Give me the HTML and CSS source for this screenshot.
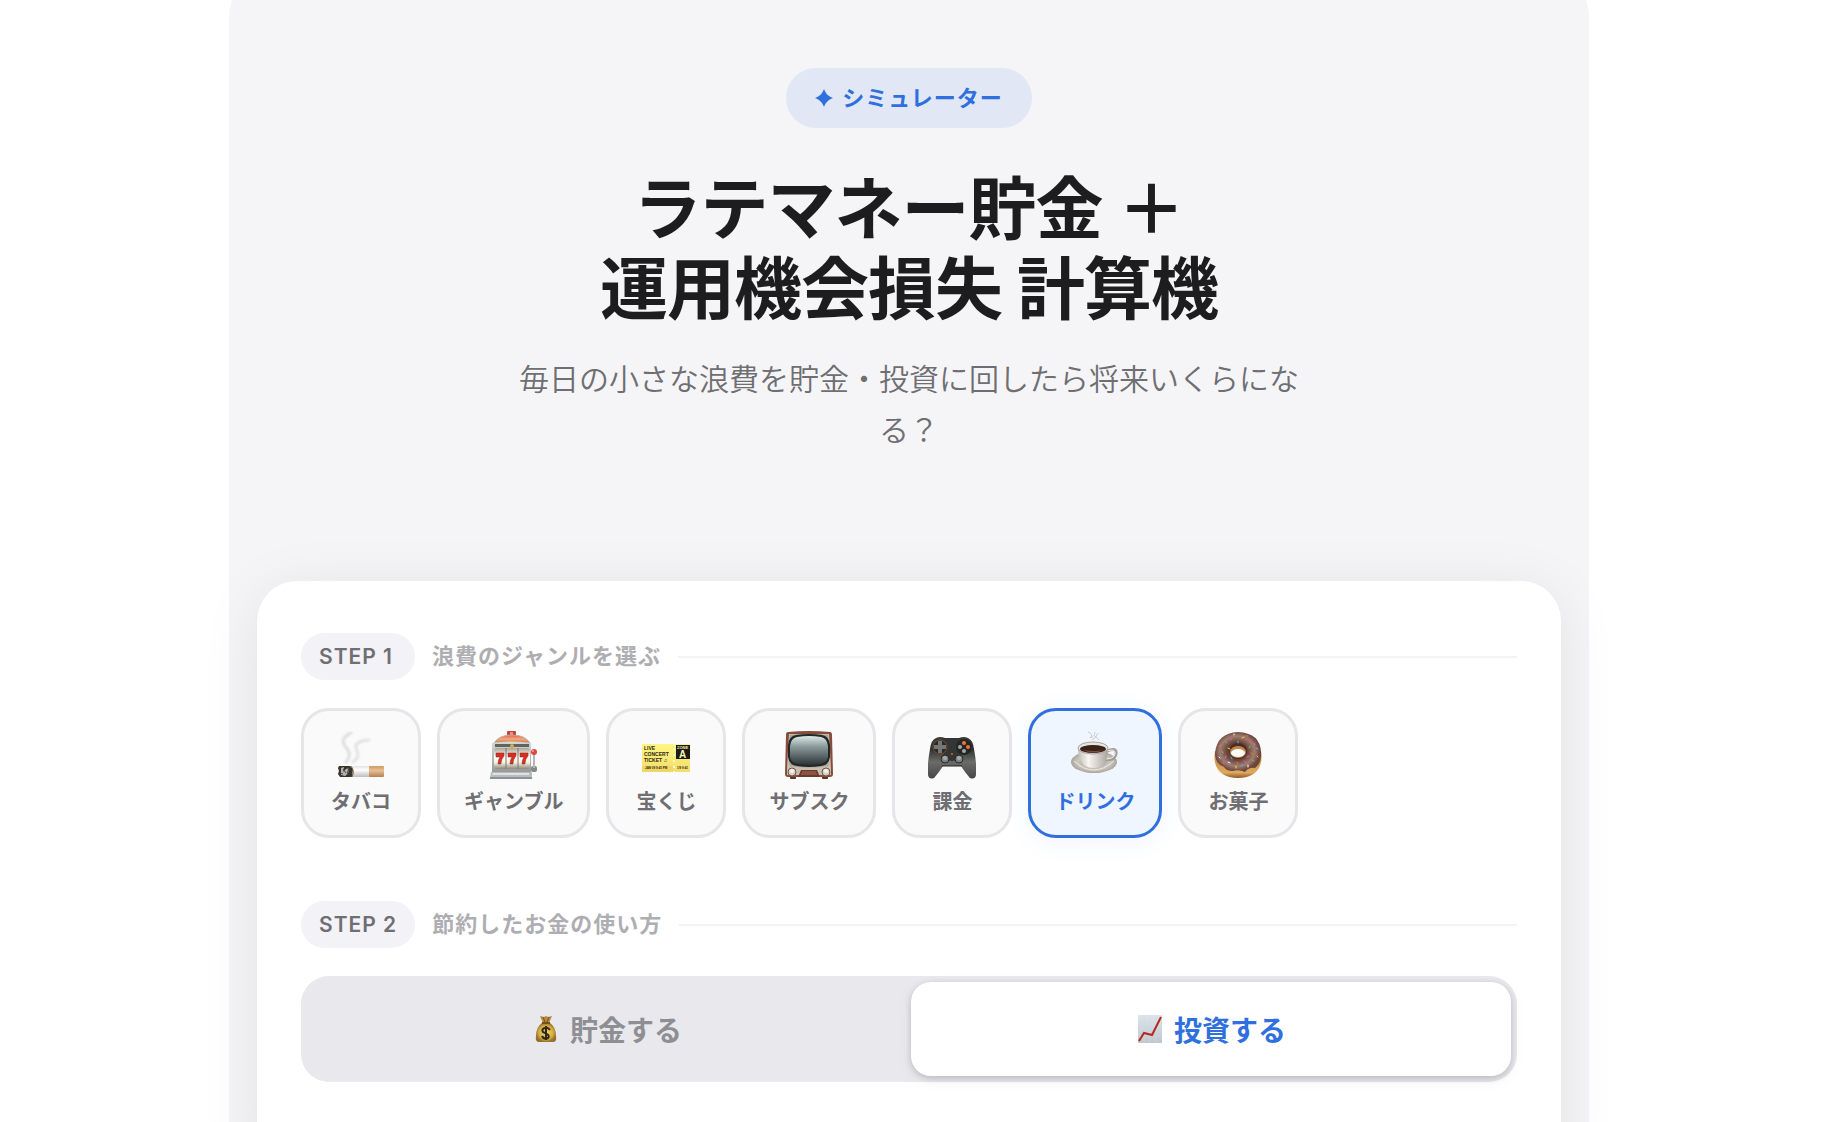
FILE: index.html
```html
<!DOCTYPE html>
<html lang="ja">
<head>
  <meta charset="UTF-8">
  <meta name="viewport" content="width=device-width, initial-scale=1.0">
  <title>ラテマネー貯金 ＋ 運用機会損失 計算機</title>
  <link rel="stylesheet" href="styles.css">
</head>
<body>
  <main class="simulator">
    <header class="hero">
      <p class="hero-badge">
        <svg class="star" viewBox="0 0 18 18" aria-hidden="true"><path d="M9 0C11 5 13 7 18 9C13 11 11 13 9 18C7 13 5 11 0 9C5 7 7 5 9 0Z" fill="currentColor"/></svg>
        <span>シミュレーター</span>
      </p>
      <h1>ラテマネー貯金 ＋<br>運用機会損失 計算機</h1>
      <p class="hero-sub">毎日の小さな浪費を貯金・投資に回したら将来いくらになる？</p>
    </header>

    <div class="card">
      <section class="step">
        <div class="step-head">
          <span class="step-no">STEP 1</span>
          <h2>浪費のジャンルを選ぶ</h2>
        </div>
        <div class="genres">
          <button type="button" class="genre">
            <svg viewBox="0 0 48 48" aria-hidden="true">
              <defs>
                <linearGradient id="paper" x1="0" y1="0" x2="0" y2="1"><stop offset="0" stop-color="#e2e2e2"/><stop offset=".35" stop-color="#fff"/><stop offset="1" stop-color="#bdbdc0"/></linearGradient>
                <linearGradient id="filter" x1="0" y1="0" x2="0" y2="1"><stop offset="0" stop-color="#c99a67"/><stop offset=".4" stop-color="#e9c095"/><stop offset="1" stop-color="#b78050"/></linearGradient>
                <filter id="smoke" x="-20%" y="-20%" width="140%" height="140%"><feGaussianBlur stdDeviation="1"/></filter>
              </defs>
              <g filter="url(#smoke)" fill="none" stroke-linecap="round">
                <path d="M9 31C14 25 13 21 8 15C4 10 7 5 14 2" stroke="#dedede" stroke-width="3"/>
                <path d="M16 31C23 26 21 22 19 17C18 12 24 9 32 9" stroke="#e2e2e2" stroke-width="3"/>
              </g>
              <rect x="12" y="35" width="22" height="11" fill="url(#paper)"/>
              <rect x="32" y="35" width="15" height="11" rx="1" fill="url(#filter)"/>
              <path d="M2 35L13 35L16 38L15 46L3 46L1 43L2 40L1 37Z" fill="#37332f"/>
              <path d="M4 37L7 36L6 41L9 38L12 37L11 43L8 45L4 44Z" fill="#b7b2ac"/>
              <path d="M6 38L9 42M12 36L10 44M3 42L6 43" stroke="#4e4843" stroke-width="1"/>
              <path d="M14 35Q18 40 15 46" stroke="#806336" stroke-width="1" fill="none"/>
            </svg>
            <span>タバコ</span>
          </button>
          <button type="button" class="genre">
            <svg viewBox="0 0 48 48" aria-hidden="true">
              <defs>
                <linearGradient id="dome" x1="0" y1="0" x2="0" y2="1"><stop offset="0" stop-color="#e0603f"/><stop offset=".5" stop-color="#f5a783"/><stop offset="1" stop-color="#c9823a"/></linearGradient>
                <linearGradient id="reel" x1="0" y1="0" x2="0" y2="1"><stop offset="0" stop-color="#a9a594"/><stop offset=".4" stop-color="#fffef6"/><stop offset=".7" stop-color="#f3f0e2"/><stop offset="1" stop-color="#8c897b"/></linearGradient>
                <linearGradient id="steel" x1="0" y1="0" x2="0" y2="1"><stop offset="0" stop-color="#d5d8d8"/><stop offset="1" stop-color="#929898"/></linearGradient>
              </defs>
              <rect x="17" y="0" width="9" height="5" rx="1" fill="#c9412f"/>
              <rect x="20" y="1" width="3" height="3" fill="#f58c72"/>
              <path d="M4 12Q9 4 22 4Q35 4 40 12Z" fill="url(#dome)" stroke="#b0b2b0" stroke-width="1"/>
              <path d="M2 12Q22 9 41 12V42H2Z" fill="url(#steel)"/>
              <rect x="5" y="13" width="34" height="3" fill="#62635c"/>
              <circle cx="22" cy="15" r="2" fill="#d5a93c"/>
              <rect x="4" y="17" width="36" height="21" rx="3" fill="url(#reel)"/>
              <path d="M16 17V38M28 17V38" stroke="#7c786c" stroke-width="1"/>
              <g fill="#dc2d24" stroke="#8d211c" stroke-width=".5">
                <path d="M6 22H14V25Q11 28 11 33H8Q8 29 10 26H6Z"/>
                <path d="M18 22H26V25Q23 28 23 33H20Q20 29 22 26H18Z"/>
                <path d="M30 22H38V25Q35 28 35 33H32Q32 29 34 26H30Z"/>
              </g>
              <path d="M1 41L42 41V47H0Z" fill="#b8bcbc"/>
              <path d="M3 42H39V44H2Z" fill="#dfe2e2"/>
              <path d="M0 46H42V48H0Z" fill="#8c9191"/>
              <rect x="41" y="35" width="6" height="6" rx="2" fill="#858888"/>
              <path d="M44 22V37" stroke="#b9b5b2" stroke-width="2"/>
              <circle cx="44" cy="21" r="3" fill="#e2463f"/>
              <circle cx="43" cy="20" r="1" fill="#ff9e96"/>
            </svg>
            <span>ギャンブル</span>
          </button>
          <button type="button" class="genre">
            <svg viewBox="0 0 48 48" aria-hidden="true">
              <defs>
                <linearGradient id="stub" x1="0" y1="0" x2="0" y2="1"><stop offset="0" stop-color="#fdf683"/><stop offset="1" stop-color="#f3dc6c"/></linearGradient>
              </defs>
              <path d="M0 13H48V41H0Z" fill="url(#stub)"/>
              <path d="M0 35H31V41H0Z" fill="#f0d667"/>
              <rect x="34" y="14" width="14" height="14" fill="#1c1a12"/>
              <g fill="#fff"><circle cx="32" cy="13" r="1"/><circle cx="32" cy="18" r="1"/><circle cx="32" cy="24" r="1"/><circle cx="32" cy="30" r="1"/><circle cx="32" cy="36" r="1"/><circle cx="32" cy="41" r="1"/></g>
              <g class="ticket-text">
                <text x="2" y="19" font-size="5">LIVE</text>
                <text x="2" y="25" font-size="5">CONCERT</text>
                <text x="2" y="31" font-size="5">TICKET ♫</text>
                <text x="3" y="38" font-size="3">JAN 09  9:41 PM</text>
                <text x="35" y="38" font-size="3">1/9  9:41</text>
                <text x="35" y="18" font-size="4" class="zone">ZONE</text>
                <text x="37" y="27" font-size="10" class="zone">A</text>
              </g>
            </svg>
            <span>宝くじ</span>
          </button>
          <button type="button" class="genre">
            <svg viewBox="0 0 48 48" aria-hidden="true">
              <defs>
                <linearGradient id="screen" x1="0" y1="0" x2="0" y2="1"><stop offset="0" stop-color="#dce9e9"/><stop offset=".35" stop-color="#8d9d9e"/><stop offset="1" stop-color="#2c3436"/></linearGradient>
              </defs>
              <rect x="5" y="44" width="6" height="4" rx="1" fill="#59352a"/>
              <rect x="37" y="44" width="6" height="4" rx="1" fill="#59352a"/>
              <path d="M3 1Q24 -1 45 1Q47 1 47 4L48 43Q48 46 45 46H3Q0 46 0 43L1 4Q1 1 3 1Z" fill="#874c3a"/>
              <path d="M4 3H44L46 37V44H2V37Z" fill="#c8beb0"/>
              <path d="M5 4Q24 2 43 4Q46 21 43 35Q24 38 5 35Q2 20 5 4Z" fill="#a9a296"/>
              <path d="M11 4Q24 2 37 4Q44 5 45 14V26Q44 34 36 35Q24 37 12 35Q4 34 3 26V14Q4 5 11 4Z" fill="#22282a"/>
              <path d="M12 6Q24 4 36 6Q42 7 43 15V26Q42 32 35 33Q24 35 13 33Q6 32 5 26V15Q6 7 12 6Z" fill="url(#screen)"/>
              <path d="M16 39H32L35 46H13Z" fill="#6c3a2c"/>
              <path d="M17 41H31M16 43H32" stroke="#a96e54" stroke-width="1"/>
              <circle cx="7" cy="41" r="4" fill="#d9d3c6" stroke="#6b574b"/>
              <circle cx="41" cy="41" r="4" fill="#d9d3c6" stroke="#6b574b"/>
              <circle cx="7" cy="40" r="2" fill="#f6f2e8"/><circle cx="41" cy="40" r="2" fill="#f6f2e8"/>
            </svg>
            <span>サブスク</span>
          </button>
          <button type="button" class="genre">
            <svg viewBox="0 0 48 48" aria-hidden="true">
              <defs>
                <linearGradient id="pad" x1="0" y1="0" x2="0" y2="1"><stop offset="0" stop-color="#3c3e3d"/><stop offset=".3" stop-color="#303231"/><stop offset=".6" stop-color="#6b6c6a"/><stop offset="1" stop-color="#454645"/></linearGradient>
              </defs>
              <path d="M8 7Q12 5 17 7H31Q36 5 40 7Q45 9 46 18Q49 34 48 44Q47 49 42 47Q36 40 33 35H15Q12 40 6 47Q1 49 0 44Q-1 34 2 18Q3 9 8 7Z" fill="url(#pad)"/>
              <path d="M14 7H34L33 21Q31 30 24 30Q17 30 15 21Z" fill="#343635"/>
              <path d="M14 35H34" stroke="#222" stroke-width="1"/>
              <circle cx="12" cy="16" r="7" fill="#292b2a" stroke="#7b4b30"/>
              <path d="M10 10H14V14H18V18H14V22H10V18H6V14H10Z" fill="#737775"/>
              <circle cx="36" cy="16" r="8" fill="#252726"/>
              <circle cx="36" cy="12" r="2" fill="#f4752f"/><circle cx="40" cy="16" r="2" fill="#f4752f"/>
              <circle cx="32" cy="16" r="2" fill="#a3a7a5"/><circle cx="36" cy="20" r="2" fill="#a3a7a5"/>
              <circle cx="24" cy="23" r="1" fill="#cd6b36"/>
              <circle cx="17" cy="28" r="4" fill="#7d8381" stroke="#272827"/><circle cx="31" cy="28" r="4" fill="#7d8381" stroke="#272827"/>
              <circle cx="17" cy="27" r="2" fill="#a7adab"/><circle cx="31" cy="27" r="2" fill="#a7adab"/>
            </svg>
            <span>課金</span>
          </button>
          <button type="button" class="genre active" aria-pressed="true">
            <svg viewBox="0 0 48 48" aria-hidden="true">
              <defs>
                <linearGradient id="cup" x1="0" y1="0" x2="1" y2="0"><stop offset="0" stop-color="#c2bdb5"/><stop offset=".35" stop-color="#f8f6f2"/><stop offset="1" stop-color="#aaa49b"/></linearGradient>
                <radialGradient id="saucer"><stop offset="0" stop-color="#8f8981"/><stop offset=".7" stop-color="#cdc8c0"/><stop offset="1" stop-color="#aaa59c"/></radialGradient>
              </defs>
              <path d="M17 1Q23 3 19 7Q24 6 24 1M21 9Q26 6 27 2M24 5L28 9" stroke="#c9cdd2" stroke-width="1" fill="none"/>
              <ellipse cx="23" cy="31" rx="23" ry="11" fill="url(#saucer)"/>
              <path d="M3 30Q22 48 43 30" stroke="#ece9e4" stroke-width="1" fill="none"/>
              <path d="M36 20Q46 16 45 23Q44 29 34 29" stroke="#a29c95" stroke-width="3" fill="none"/>
              <path d="M36 20Q45 17 44 23Q43 28 34 28" stroke="#f3f0ed" stroke-width="1" fill="none"/>
              <path d="M7 17Q7 37 23 37Q37 37 37 17Z" fill="url(#cup)"/>
              <ellipse cx="22" cy="17" rx="15" ry="6" fill="#e8e4de" stroke="#a8a29b"/>
              <ellipse cx="22" cy="18" rx="13" ry="4" fill="#3b2118"/>
              <path d="M12 19Q22 24 32 19Q24 21 12 19Z" fill="#765040"/>
            </svg>
            <span>ドリンク</span>
          </button>
          <button type="button" class="genre">
            <svg viewBox="0 0 48 48" aria-hidden="true">
              <defs>
                <linearGradient id="dough" x1="0" y1="0" x2="0" y2="1"><stop offset=".5" stop-color="#d29a50"/><stop offset=".8" stop-color="#dcaa60"/><stop offset="1" stop-color="#925526"/></linearGradient>
                <radialGradient id="glaze" cx=".48" cy=".48"><stop offset="0" stop-color="#57332a"/><stop offset=".45" stop-color="#6a443a"/><stop offset=".75" stop-color="#a07d73"/><stop offset="1" stop-color="#6b443a"/></radialGradient>
              </defs>
              <path d="M1 20H47C50 38 40 47 24 47C8 47 -2 38 1 20Z" fill="url(#dough)"/>
              <path d="M24 1Q46 2 47 21Q48 32 41 37Q35 36 31 41Q25 38 19 40Q12 40 10 36Q1 33 1 22Q3 2 24 1Z" fill="url(#glaze)"/>
              <ellipse cx="24" cy="20" rx="9" ry="8" fill="#4d2c24"/>
              <ellipse cx="24" cy="21" rx="8" ry="6" fill="#c28a4a"/>
              <ellipse cx="24" cy="22" rx="7" ry="4" fill="#fafafa"/>
              <g stroke-width="1" stroke-linecap="round">
                <path d="M20 3V4M5 26L6 27M34 34V36M14 31L16 32" stroke="#fff"/>
                <path d="M11 10L13 12M36 15L35 17M8 20L9 22M38 29L40 30" stroke="#61c64b"/>
                <path d="M28 7L30 6M14 17L16 18M22 35V37M43 25L44 26" stroke="#f2d94b"/>
                <path d="M16 9L18 8M35 9L37 10M9 31L10 33M30 30L32 31" stroke="#ed5f82"/>
                <path d="M24 10V12M42 17L44 18M17 26L18 28M27 35L29 34" stroke="#47b8e5"/>
                <path d="M5 15L7 14M32 5H34M37 22L39 23M23 31L24 33" stroke="#ef7336"/>
                <path d="M40 12L41 14M12 25L11 27M33 26L35 25" stroke="#d56bd5"/>
              </g>
            </svg>
            <span>お菓子</span>
          </button>
        </div>
      </section>

      <section class="step">
        <div class="step-head">
          <span class="step-no">STEP 2</span>
          <h2>節約したお金の使い方</h2>
        </div>
        <div class="modes">
          <button type="button" class="mode">
            <svg viewBox="0 0 28 28" aria-hidden="true">
              <defs>
                <radialGradient id="bag"><stop offset="0" stop-color="#f4d873"/><stop offset=".7" stop-color="#d4ac42"/><stop offset="1" stop-color="#94722a"/></radialGradient>
              </defs>
              <path d="M8 1L12 2L14 1L16 2L20 1L17 8H11Z" fill="#b58a3a"/>
              <path d="M11 2L13 7M17 2L15 7" stroke="#77551e" stroke-width="1"/>
              <path d="M10 8Q4 12 4 21Q3 27 7 27H21Q25 27 24 21Q24 12 18 8Z" fill="url(#bag)"/>
              <path d="M10 8H18" stroke="#76511e" stroke-width="2"/>
              <path d="M18 15Q16 12 13 13Q9 14 11 17Q13 18 15 19Q18 21 16 23Q12 25 10 21M14 11V25" stroke="#302818" stroke-width="2" fill="none"/>
            </svg>
            貯金する
          </button>
          <button type="button" class="mode active" aria-pressed="true">
            <svg viewBox="0 0 28 28" aria-hidden="true">
              <defs>
                <linearGradient id="sheet" x1="0" y1="0" x2="0" y2="1"><stop offset="0" stop-color="#dce5ed"/><stop offset="1" stop-color="#c0c7ce"/></linearGradient>
              </defs>
              <rect x="2" y="0" width="24" height="28" fill="url(#sheet)"/>
              <path d="M2 7H26M2 14H26M2 21H26M8 0V28M14 0V28M20 0V28" stroke="#d0d8df" stroke-width="1" opacity=".6"/>
              <path d="M3 26L8 18L16 20L25 2" stroke="#b92722" stroke-width="2" fill="none"/>
            </svg>
            投資する
          </button>
        </div>
      </section>
    </div>
  </main>
  <script>
    // One active button per group
    document.querySelectorAll(".genres, .modes").forEach((group) => {
      group.addEventListener("click", (e) => {
        const button = e.target.closest("button");
        if (!button) return;
        group.querySelectorAll("button").forEach((b) => {
          b.classList.toggle("active", b === button);
          b.setAttribute("aria-pressed", b === button);
        });
      });
    });
  </script>
</body>
</html>
```
FILE: styles.css
```css
* {
  box-sizing: border-box;
}
body {
  margin: 0;
  padding-right: 10px;
  background-color: #fff;
  color: #1d1d1f;
  font-family: Inter, "Noto Sans CJK JP", sans-serif;
}
h1,
h2,
p {
  margin: 0;
}
button {
  font-family: inherit;
  cursor: pointer;
}
.simulator {
  max-width: 1360px;
  margin: -38px auto 0;
  padding: 0 28px 56px;
  background-color: #f5f5f7;
  border-radius: 56px;
}
.hero {
  display: flex;
  flex-direction: column;
  align-items: center;
  padding: 106px 48px 125px;
  text-align: center;
}
.hero-badge {
  display: flex;
  align-items: center;
  gap: 9px;
  height: 60px;
  padding: 0 29px;
  border-radius: 30px;
  background-color: #e1e7f5;
  color: #2f6fde;
  font-size: 22px;
  font-weight: 600;
  letter-spacing: 1px;
}
.hero-badge span {
  padding-bottom: 5px;
}
.star {
  width: 18px;
  height: 18px;
}
h1 {
  margin-top: 41px;
  font-size: 68px;
  font-weight: 700;
  line-height: 80px;
  letter-spacing: -1px;
}
.hero-sub {
  max-width: 800px;
  margin-top: 25px;
  color: #6e6e73;
  font-size: 30px;
  font-weight: 350;
  line-height: 51px;
}
.card {
  padding: 52px 44px 96px;
  background-color: #fff;
  border-radius: 40px;
  box-shadow: 0 8px 60px rgba(0, 0, 0, 0.08);
}
.step + .step {
  margin-top: 63px;
}
.step-head {
  display: flex;
  align-items: center;
  gap: 17px;
  margin-bottom: 28px;
}
.step-head::after {
  content: "";
  flex: 1;
  height: 2px;
  background-color: #f2f2f7;
}
.step-no {
  min-width: 114px;
  padding: 0 18px;
  border-radius: 24px;
  background-color: #f2f2f7;
  color: #6e6e73;
  font-size: 21px;
  font-weight: 600;
  line-height: 47px;
  letter-spacing: 1px;
}
h2 {
  color: #aeaeb2;
  font-size: 22px;
  font-weight: 600;
  line-height: 47px;
  letter-spacing: 1px;
}
.genres {
  display: flex;
  flex-wrap: wrap;
  gap: 16px;
}
.genre {
  display: flex;
  flex-direction: column;
  align-items: center;
  gap: 9px;
  min-width: 120px;
  padding: 20px 24px 19px;
  border: 3px solid #e5e5ea;
  border-radius: 28px;
  background-color: #fafafa;
  color: #6e6e73;
  font-size: 20px;
  font-weight: 600;
  line-height: 28px;
}
.genre svg {
  width: 48px;
  height: 48px;
}
.genre.active {
  border-color: #2f6fde;
  background-color: #f0f6ff;
  color: #2f6fde;
  box-shadow: 0 4px 24px rgba(47, 111, 222, 0.08);
}
.ticket-text {
  fill: #29260f;
  font-family: "Liberation Sans", "DejaVu Sans", sans-serif;
  font-weight: 700;
}
.ticket-text .zone {
  fill: #f9f3be;
}
.modes {
  display: flex;
  gap: 4px;
  padding: 6px;
  border-radius: 28px;
  background-color: #e8e8ed;
}
.mode {
  display: flex;
  flex: 1;
  align-items: center;
  justify-content: center;
  gap: 10px;
  height: 94px;
  border: none;
  border-radius: 20px;
  background: none;
  color: #8e8e93;
  font-size: 28px;
  font-weight: 600;
}
.mode svg {
  width: 28px;
  height: 28px;
}
.mode.active {
  background-color: #fff;
  color: #2f6fde;
  box-shadow: 0 2px 6px rgba(0, 0, 0, 0.16), 0 4px 16px rgba(0, 0, 0, 0.06);
}
```
